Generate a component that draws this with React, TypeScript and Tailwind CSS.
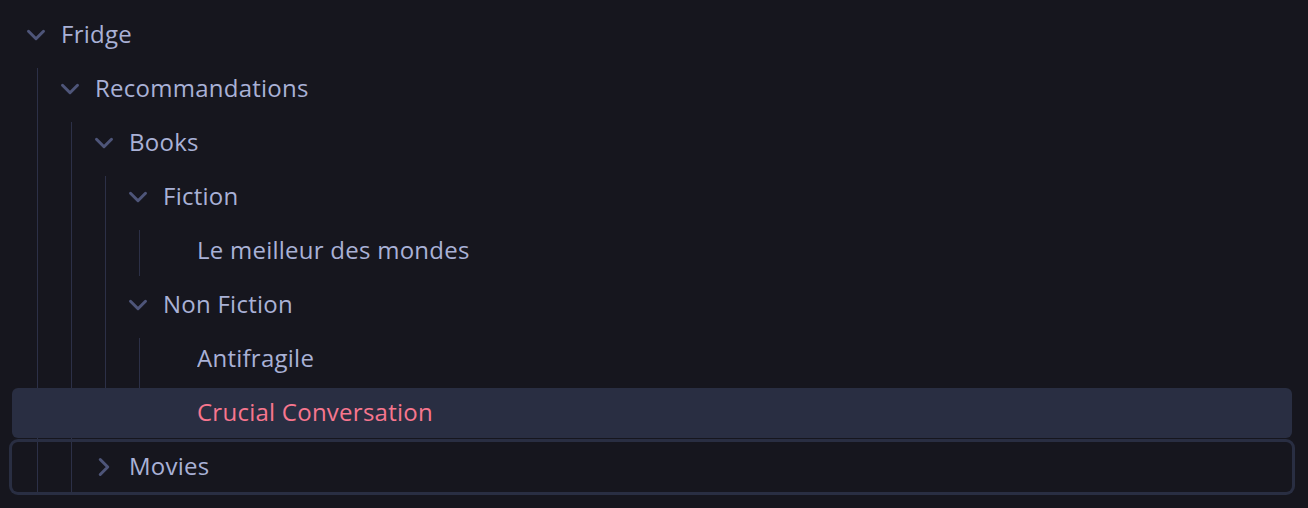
import { ChevronDown, ChevronRight } from "lucide-react";

type Node = {
  label: string;
  children?: Node[];
  open?: boolean;
  selected?: boolean;
  focused?: boolean;
};

const tree: Node[] = [
  {
    label: "Fridge",
    open: true,
    children: [
      {
        label: "Recommandations",
        open: true,
        children: [
          {
            label: "Books",
            open: true,
            children: [
              { label: "Fiction", open: true, children: [{ label: "Le meilleur des mondes" }] },
              {
                label: "Non Fiction",
                open: true,
                children: [{ label: "Antifragile" }, { label: "Crucial Conversation", selected: true }],
              },
            ],
          },
          { label: "Movies", focused: true, children: [{ label: "Dune" }] },
        ],
      },
    ],
  },
];

// indent per depth, written out so tailwind picks them up
const indent = ["pl-[9px]", "pl-[43px]", "pl-[77px]", "pl-[111px]", "pl-[145px]"];
const guide = ["left-[25px]", "left-[59px]", "left-[93px]", "left-[127px]"];

function Item({ node, depth }: { node: Node; depth: number }) {
  const hasChildren = !!node.children;
  return (
    <li>
      <div
        className={`relative mt-1 flex h-[50px] items-center gap-[10px] rounded-md ${indent[depth]} ${
          node.selected ? "bg-[#292e42] text-[#f7768e]" : "text-[#a9b1d6]"
        } ${node.focused ? "ring-[3px] ring-[#292e42]" : ""}`}
      >
        <span className="flex w-[30px] shrink-0 items-center justify-center text-[#4e5579]">
          {hasChildren &&
            (node.open ? (
              <ChevronDown size={30} strokeWidth={2.4} />
            ) : (
              <ChevronRight size={30} strokeWidth={2.4} />
            ))}
        </span>
        <span className="truncate pb-[3px]">{node.label}</span>
      </div>
      {hasChildren && node.open && (
        <ul className="relative">
          <span className={`absolute top-1 bottom-0 w-px bg-[#2c3047] ${guide[depth]}`} />
          {node.children!.map((c) => (
            <Item key={c.label} node={c} depth={depth + 1} />
          ))}
        </ul>
      )}
    </li>
  );
}

export default function App() {
  return (
    <div className="h-[508px] w-full overflow-hidden bg-[#16161e] pt-[6px] pr-4 pl-3 font-['Open_Sans',sans-serif] text-[24px] tracking-[0.25px]">
      <ul>
        {tree.map((n) => (
          <Item key={n.label} node={n} depth={0} />
        ))}
      </ul>
    </div>
  );
}
